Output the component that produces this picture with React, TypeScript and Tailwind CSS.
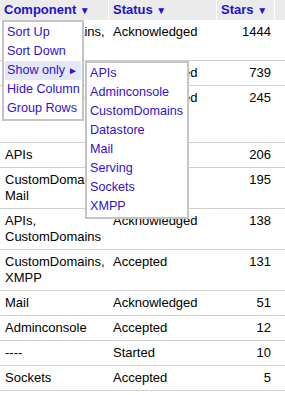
import React from 'react';

// Issue table with an open column menu
interface IssueRow {
  component: string;
  status: string;
  stars: number;
  tall?: boolean;
}

const ROWS: IssueRow[] = [
  { component: 'CustomDomains, Datastore', status: 'Acknowledged', stars: 1444 },
  { component: 'Datastore', status: 'Acknowledged', stars: 739 },
  { component: 'APIs, Datastore', status: 'Acknowledged', stars: 245, tall: true },
  { component: 'APIs', status: 'Accepted', stars: 206 },
  { component: 'CustomDomains, Mail', status: 'Accepted', stars: 195 },
  { component: 'APIs, CustomDomains', status: 'Acknowledged', stars: 138 },
  { component: 'CustomDomains, XMPP', status: 'Accepted', stars: 131 },
  { component: 'Mail', status: 'Acknowledged', stars: 51 },
  { component: 'Adminconsole', status: 'Accepted', stars: 12 },
  { component: '----', status: 'Started', stars: 10 },
  { component: 'Sockets', status: 'Accepted', stars: 5 },
];

const MENU_ITEMS = ['Sort Up', 'Sort Down', 'Show only', 'Hide Column', 'Group Rows'];
const SUB_ITEMS = ['APIs', 'Adminconsole', 'CustomDomains', 'Datastore', 'Mail', 'Serving', 'Sockets', 'XMPP'];

const HeaderCell = ({ label, className }: { label: string; className: string }) => (
  <div className={`px-[4px] h-[20px] leading-[20px] font-bold text-[#2211cc] border-r border-white ${className}`}>
    {label} <span className="text-[10px]">▼</span>
  </div>
);

export default function App() {
  return (
    <div
      className="relative w-[285px] h-[395px] overflow-hidden bg-white text-[13px] leading-[16px] text-black"
      style={{ fontFamily: '"Liberation Sans", Arial, sans-serif' }}
    >
      {/* Header */}
      <div className="flex bg-[#ebebeb]">
        <HeaderCell label="Component" className="w-[109px]" />
        <HeaderCell label="Status" className="w-[108px]" />
        <HeaderCell label="Stars" className="w-[58px]" />
        <div className="flex-1" />
      </div>

      {/* Rows */}
      {ROWS.map((row, i) => (
        <div key={i} className={`flex border-b border-[#d0d0d0] ${row.tall ? 'min-h-[57px]' : ''}`}>
          <div className="w-[109px] px-[5px] py-[4px]">{row.component}</div>
          <div className="w-[108px] px-[4px] py-[4px]">{row.status}</div>
          <div className="w-[58px] px-[4px] py-[4px] text-right">{row.stars}</div>
          <div className="flex-1" />
        </div>
      ))}

      {/* Column menu */}
      <div className="absolute left-[2px] top-[20px] w-[82px] bg-white border-2 border-[#c4c4c4] p-[1px] text-[12.6px] text-[#3311cc]">
        {MENU_ITEMS.map((item) => (
          <div
            key={item}
            className={`h-[19px] leading-[19px] px-[2px] whitespace-nowrap ${item === 'Show only' ? 'bg-[#e3e8f6]' : ''}`}
          >
            {item}
            {item === 'Show only' && <span className="ml-[3px] text-[10px]">►</span>}
          </div>
        ))}
      </div>

      {/* Show only submenu */}
      <div className="absolute left-[85px] top-[61px] w-[104px] bg-white border-2 border-[#c4c4c4] p-[1px] text-[12.6px] text-[#3311cc]">
        {SUB_ITEMS.map((item) => (
          <div key={item} className="h-[19px] leading-[19px] px-[2px] whitespace-nowrap">
            {item}
          </div>
        ))}
      </div>
    </div>
  );
}
